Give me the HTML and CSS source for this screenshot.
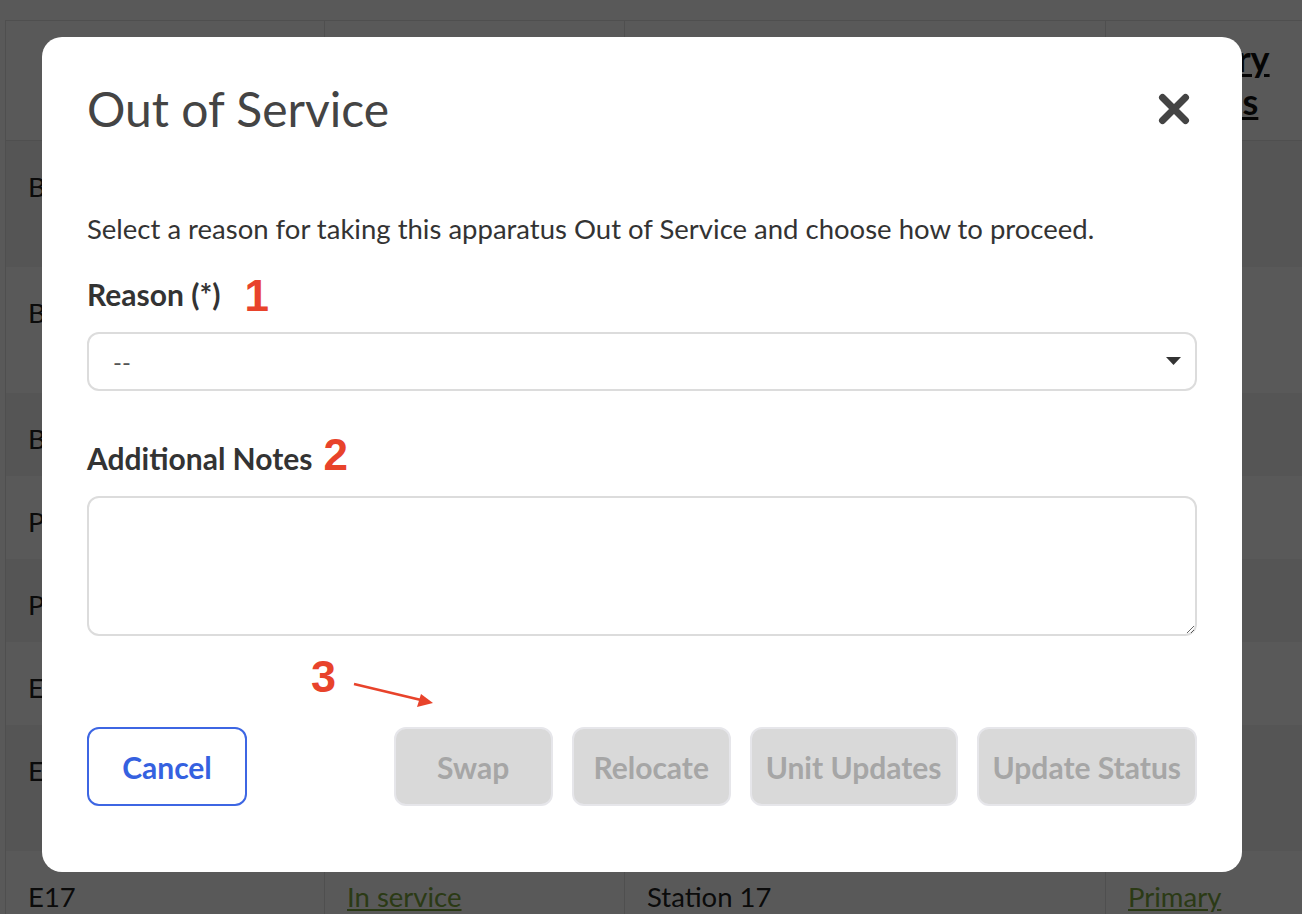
FILE: index.html
```html
<!DOCTYPE html>
<html lang="en">
<head>
<meta charset="utf-8">
<title>Out of Service</title>
<link rel="stylesheet" href="styles.css">
</head>
<body>
<div class="page">
  <table class="units">
    <thead>
      <tr>
        <th></th>
        <th></th>
        <th></th>
        <th><a href="#">Auxiliary<br>Stations</a></th>
      </tr>
    </thead>
    <tbody>
      <tr class="tall"><td>BR17</td><td><a href="#">In service</a></td><td>Station 17</td><td><a href="#">Primary</a></td></tr>
      <tr class="tall"><td>BT17</td><td><a href="#">In service</a></td><td>Station 17</td><td><a href="#">Primary</a></td></tr>
      <tr class="short"><td>B17</td><td><a href="#">In service</a></td><td>Station 17</td><td><a href="#">Primary</a></td></tr>
      <tr class="short"><td>P17</td><td><a href="#">In service</a></td><td>Station 17</td><td><a href="#">Primary</a></td></tr>
      <tr class="short"><td>PT17</td><td><a href="#">In service</a></td><td>Station 17</td><td><a href="#">Primary</a></td></tr>
      <tr class="short"><td>EA17</td><td><a href="#">In service</a></td><td>Station 17</td><td><a href="#">Primary</a></td></tr>
      <tr class="tall"><td>ER17</td><td></td><td></td><td></td></tr>
      <tr class="last"><td>E17</td><td><a href="#">In service</a></td><td>Station 17</td><td><a href="#">Primary</a></td></tr>
    </tbody>
  </table>
</div>

<div class="overlay"></div>

<div class="modal" role="dialog" aria-labelledby="oos-title">
  <div class="modal-head">
    <h2 class="title" id="oos-title">Out of Service</h2>
    <button class="close" aria-label="Close">
      <svg viewBox="0 0 32 32" width="32" height="32"><path d="M4.5 4.5 L27.5 27.5 M27.5 4.5 L4.5 27.5" stroke="#444" stroke-width="7" stroke-linecap="round" fill="none"/></svg>
    </button>
  </div>

  <p class="desc">Select a reason for taking this apparatus Out of Service and choose how to proceed.</p>

  <label class="label label-reason">Reason (*)<span class="mark mark-1">1</span></label>
  <div class="select">
    <span class="select-value">--</span>
    <svg class="caret" viewBox="0 0 15 8" width="15" height="8"><path d="M0 0 H15 L7.5 8 Z" fill="#333"/></svg>
  </div>

  <label class="label label-notes">Additional Notes<span class="mark mark-2">2</span></label>
  <textarea class="notes"></textarea>

  <div class="actions">
    <button class="btn btn-cancel">Cancel</button>
    <div class="action-group">
      <button class="btn btn-disabled" disabled>Swap</button>
      <button class="btn btn-disabled" disabled>Relocate</button>
      <button class="btn btn-disabled" disabled>Unit Updates</button>
      <button class="btn btn-disabled" disabled>Update Status</button>
    </div>
  </div>

  <span class="mark mark-3">3</span>
  <svg class="arrow" viewBox="0 0 84 26" width="84" height="26"><path d="M1 3 L68 19" stroke="#e8432b" stroke-width="2.6" fill="none"/><path d="M80 22 L64 26 L68 13 Z" fill="#e8432b"/></svg>
</div>
</body>
</html>
```

FILE: styles.css
```css
html, body {
  margin: 0;
  padding: 0;
}

body {
  width: 1302px;
  height: 914px;
  overflow: hidden;
  background: #fff;
  font-family: Lato, "Open Sans", sans-serif;
  color: #222;
}

.page {
  padding-top: 20px;
  padding-left: 5px;
}

.units {
  border-collapse: collapse;
  width: 1297px;
  table-layout: fixed;
  font-size: 27.5px;
  line-height: 33px;
}

.units th:nth-child(1), .units td:nth-child(1) { width: 319px; }
.units th:nth-child(2), .units td:nth-child(2) { width: 300px; }
.units th:nth-child(3), .units td:nth-child(3) { width: 481px; }
.units th:nth-child(4), .units td:nth-child(4) { width: 197px; }

.units th {
  height: 120px;
  box-sizing: border-box;
  padding: 16px 22px 0;
  text-align: left;
  vertical-align: top;
  font-size: 36px;
  font-weight: 700;
  line-height: 43px;
  border: 1px solid #e2e2e2;
  border-right: 0;
  background: #fff;
}

.units th a {
  color: #111;
}

.units td {
  padding: 29px 22px 0;
  vertical-align: top;
  border-left: 1px solid #e2e2e2;
  white-space: nowrap;
  overflow: hidden;
}

.units tbody tr:nth-child(odd) { background: #f2f2f2; }
.units tbody tr:nth-child(even) { background: #fff; }

.units tr.tall { height: 126px; }
.units tr.short { height: 83px; }
.units tr.last { height: 64px; }

.units td a {
  color: #7ba63e;
}

.overlay {
  position: fixed;
  inset: 0;
  background: rgba(0, 0, 0, 0.65);
}

.modal {
  position: fixed;
  left: 42px;
  top: 37px;
  width: 1200px;
  height: 835px;
  box-sizing: border-box;
  padding: 43px 45px 66px;
  background: #fff;
  border-radius: 20px;
  display: flex;
  flex-direction: column;
  font-family: Lato, "Open Sans", sans-serif;
  color: #333;
}

.modal-head {
  display: flex;
  justify-content: space-between;
  align-items: center;
}

.title {
  margin: 0;
  font-size: 48px;
  font-weight: 400;
  line-height: 1.2;
  color: #444;
}

.close {
  border: 0;
  background: none;
  padding: 0;
  margin-right: 7px;
  width: 32px;
  height: 32px;
  display: flex;
}

.desc {
  margin: 74px 0 0;
  font-size: 27.5px;
  line-height: 33px;
  color: #333;
}

.label {
  display: block;
  font-size: 30px;
  font-weight: 700;
  line-height: 36px;
  color: #333;
}

.label-reason { margin-top: 31px; }
.label-notes { margin-top: 49px; }

.mark {
  font-family: "Liberation Sans", Arial, sans-serif;
  font-weight: 700;
  font-size: 44px;
  line-height: 0;
  color: #e8432b;
}

.mark-1 {
  margin-left: 24px;
  vertical-align: -5px;
}

.mark-2 {
  margin-left: 11px;
}

.mark-3 {
  position: absolute;
  left: 269px;
  top: 617px;
  font-size: 45px;
  line-height: 1;
}

.arrow {
  position: absolute;
  left: 311px;
  top: 644px;
}

.select {
  margin-top: 20px;
  height: 59px;
  box-sizing: border-box;
  border: 2px solid #dcdcdc;
  border-radius: 12px;
  display: flex;
  align-items: center;
  justify-content: space-between;
  padding: 0 14px 0 24px;
}

.select-value {
  font-size: 24px;
  color: #555;
}

.notes {
  margin-top: 20px;
  height: 140px;
  box-sizing: border-box;
  border: 2px solid #dcdcdc;
  border-radius: 12px;
  resize: vertical;
  font-family: inherit;
  font-size: 24px;
  padding: 12px 20px;
  outline: none;
}

.actions {
  margin-top: auto;
  display: flex;
  justify-content: space-between;
  align-items: center;
}

.action-group {
  display: flex;
  gap: 19px;
}

.btn {
  height: 79px;
  min-width: 159px;
  box-sizing: border-box;
  padding: 0 14px;
  border-radius: 12px;
  font-family: Lato, "Open Sans", sans-serif;
  font-size: 30px;
  font-weight: 700;
}

.btn-cancel {
  width: 160px;
  border: 2px solid #3d66e3;
  background: #fff;
  color: #3561e0;
}

.btn-disabled {
  border: 2px solid #e6e6ea;
  background: #d9d9d9;
  color: #a6a6a6;
}
```
